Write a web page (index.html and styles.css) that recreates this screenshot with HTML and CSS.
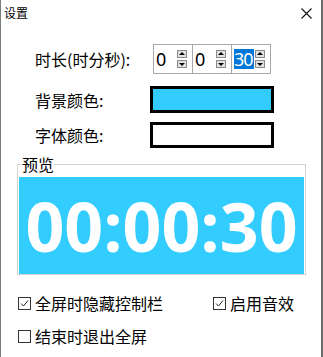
FILE: index.html
```html
<!DOCTYPE html>
<html lang="zh-CN">
<head>
<meta charset="utf-8">
<title>设置</title>
<link rel="stylesheet" href="styles.css">
</head>
<body>
<div class="window">
  <div class="titlebar">
    <span class="title">设置</span>
    <svg class="close" width="11" height="11" viewBox="0 0 11 11"><path d="M0.5 0.5 L10.5 10.5 M10.5 0.5 L0.5 10.5" stroke="#111" stroke-width="1.1" fill="none"/></svg>
  </div>
  <div class="form">
    <div class="row row-time">
      <span class="label">时长(时分秒):</span>
      <div class="spin-group">
        <div class="spin"><span class="num">0</span><span class="arrows"><span class="btn up"></span><span class="btn down"></span></span></div>
        <div class="spin"><span class="num">0</span><span class="arrows"><span class="btn up"></span><span class="btn down"></span></span></div>
        <div class="spin"><span class="num sel">30</span><span class="arrows"><span class="btn up"></span><span class="btn down"></span></span></div>
      </div>
    </div>
    <div class="row row-bg">
      <span class="label">背景颜色:</span>
      <div class="swatch swatch-blue"></div>
    </div>
    <div class="row row-fg">
      <span class="label">字体颜色:</span>
      <div class="swatch swatch-white"></div>
    </div>
  </div>
  <fieldset class="preview">
    <legend>预览</legend>
    <div class="screen">00:00:30</div>
  </fieldset>
  <div class="options">
    <label class="check"><span class="box"><svg width="11" height="11" viewBox="0 0 11 11"><path d="M2 5.5 L4.5 8 L9 2.5" stroke="#222" stroke-width="1" fill="none"/></svg></span>全屏时隐藏控制栏</label>
    <label class="check"><span class="box"><svg width="11" height="11" viewBox="0 0 11 11"><path d="M2 5.5 L4.5 8 L9 2.5" stroke="#222" stroke-width="1" fill="none"/></svg></span>启用音效</label>
    <label class="check"><span class="box"></span>结束时退出全屏</label>
  </div>
</div>
</body>
</html>
```
FILE: styles.css
```css
html, body {
  margin: 0;
  padding: 0;
  background: #fff;
}
body {
  font-family: "Noto Sans CJK SC", "Noto Sans", sans-serif;
  color: #000;
}
.window {
  box-sizing: border-box;
  width: 323px;
  height: 357px;
  border-left: 1px solid #7d7d7d;
  border-right: 2px solid #6a6a6a;
  background: #fff;
  overflow: hidden;
}
.titlebar {
  height: 26px;
  display: flex;
  align-items: center;
  justify-content: space-between;
  padding: 0 9px 0 3px;
}
.title {
  font-size: 12px;
  line-height: 16px;
}
.close {
  display: block;
}
.form {
  padding: 18px 0 0 34px;
}
.row {
  display: grid;
  grid-template-columns: 115px auto;
  align-items: center;
}
.label {
  font-size: 16px;
  line-height: 20px;
}
.row-time {
  height: 30px;
}
.row-bg {
  height: 27px;
  margin-top: 12px;
}
.row-fg {
  height: 26px;
  margin-top: 9px;
}
.spin-group {
  margin-left: 3px;
  display: flex;
  height: 30px;
  box-sizing: border-box;
  border: 1px solid #a9a9a9;
  width: 118px;
}
.spin {
  width: 38px;
  display: flex;
  align-items: center;
  justify-content: space-between;
  padding: 0 5px 0 2px;
  box-sizing: border-box;
}
.spin + .spin {
  width: 39px;
  border-left: 1px solid #a9a9a9;
}
.num {
  font-family: "Noto Sans", sans-serif;
  font-size: 18px;
  line-height: 20px;
}
.num.sel {
  background: #0078d7;
  color: #fff;
  letter-spacing: -1px;
  padding-right: 1px;
}
.arrows {
  display: flex;
  flex-direction: column;
  gap: 2px;
}
.btn {
  width: 10px;
  height: 8px;
  box-sizing: border-box;
  border: 1px solid #8a8a8a;
  background: #e2e2e2;
  position: relative;
}
.btn::after {
  content: "";
  position: absolute;
  left: 1px;
  width: 0;
  height: 0;
  border-left: 3px solid transparent;
  border-right: 3px solid transparent;
}
.btn.up::after {
  top: 1px;
  border-bottom: 3px solid #000;
}
.btn.down::after {
  top: 2px;
  border-top: 3px solid #000;
}
.swatch {
  width: 124px;
  box-sizing: border-box;
  border: 3px solid #000;
}
.row-bg .swatch {
  height: 27px;
}
.row-fg .swatch {
  height: 26px;
}
.swatch-blue {
  background: #33ccff;
}
.swatch-white {
  background: #fff;
}
.preview {
  margin: 6px 0 0 16px;
  width: 289px;
  box-sizing: border-box;
  border: 1px solid #d4d4d4;
  padding: 3px 1px 0 1px;
  min-width: 0;
}
.preview legend {
  padding: 0;
  margin-left: 3px;
  font-size: 16px;
  line-height: 20px;
}
.screen {
  height: 97px;
  background: #33ccff;
  color: #fff;
  display: flex;
  align-items: center;
  justify-content: center;
  font-family: "Open Sans", sans-serif;
  font-weight: 700;
  font-size: 68px;
  line-height: 1;
}
.options {
  display: grid;
  grid-template-columns: 195px auto;
  row-gap: 13px;
  padding: 18px 0 0 17px;
}
.check {
  display: flex;
  align-items: center;
  font-size: 16px;
  line-height: 20px;
}
.box {
  width: 13px;
  height: 13px;
  box-sizing: border-box;
  border: 1px solid #333;
  margin-right: 4px;
  display: flex;
  align-items: center;
  justify-content: center;
  background: #fff;
}
.box svg {
  display: block;
}
```
